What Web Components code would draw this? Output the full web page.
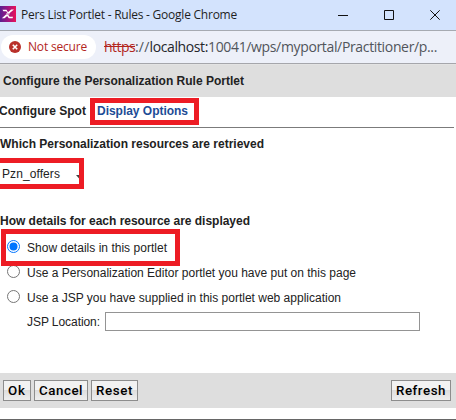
<!DOCTYPE html>
<html lang="en"><head><meta charset="utf-8"><title>Pers List Portlet - Rules</title>
<style>
html,body{margin:0;width:456px;height:420px;overflow:hidden;background:#fff}
</style></head><body>
<portlet-window></portlet-window>
<script>
const define=(name,html,init)=>customElements.define(name,class extends HTMLElement{
  connectedCallback(){
    if(this.shadowRoot)return;
    const t=document.createElement('template');t.innerHTML=html;
    this.attachShadow({mode:'open'}).append(t.content.cloneNode(true));
    if(init)init.call(this,this.shadowRoot);
  }
});

// A single line of text whose tracking is adjusted to span the given width.
define('fit-text',`<style>:host{display:block;white-space:nowrap;flex:none}span{display:inline-block;white-space:pre}:host([struck]) span{text-decoration:line-through}</style><span><slot></slot></span>`,function(root){
  const s=root.querySelector('span'),w=+this.getAttribute('w');
  const n=this.textContent.length,nat=s.getBoundingClientRect().width;
  s.style.letterSpacing=((w-nat)/n)+'px';
  this.style.width=w+'px';
});

define('title-bar',`<style>
:host{display:flex;align-items:center;box-sizing:border-box;height:30px;background:#d3e3fd;color:#1f1f1f;font:12px/16px "Open Sans","Noto Sans",sans-serif}
.logo{width:16px;height:16px;flex:none;margin:0 5px 2px 0}
fit-text{margin-right:auto}
.ctl{width:120px;height:30px;flex:none}
</style>
<svg class="logo" viewBox="0 0 16 16"><defs><linearGradient id="g" x1="0" y1="0" x2="1" y2="0"><stop offset="0" stop-color="#5a2090"/><stop offset=".5" stop-color="#a01582"/><stop offset="1" stop-color="#ea1257"/></linearGradient></defs>
<rect width="16" height="16" fill="url(#g)"/><path d="M2.5 3.8h4L8 6.2 11.2 3.4H14L9.4 7.2H7.6L6.2 5.2H3.4zM1.8 12.2 6 8.6H8L9.6 10.8H13L12.6 12.2H8.8L7.2 9.9 4.6 12.2z" fill="#fff"/><path d="M6.2 7.9h3.4" stroke="#fff" stroke-width="1"/></svg>
<fit-text w="216">Pers List Portlet - Rules - Google Chrome</fit-text>
<svg class="ctl" viewBox="336 0 120 30" fill="none" stroke="#111"><path d="M338 15.5h10M384.5 10.5h9v9h-9zM430.3 10.3l9.4 9.4M439.7 10.3l-9.4 9.4"/></svg>`);

define('address-bar',`<style>
:host{display:flex;align-items:center;box-sizing:border-box;height:34px;border-top:1px solid #a6aab1;border-bottom:1px solid #a5a6ab;background:#edf0f9;font:14px/20px "Open Sans","Noto Sans",sans-serif;color:#51555b}
.chip{display:flex;align-items:center;box-sizing:border-box;width:95px;height:24px;margin:0 8px 0 1px;padding-left:8px;border-radius:12px;background:#fff;color:#b3261e;font-size:12px}
.chip svg{width:12px;height:12px;margin-right:7px}
.p{color:#b3261e}.h{color:#24262a}
</style>
<div class="chip"><svg viewBox="0 0 12 12"><circle cx="6" cy="6" r="6" fill="#b9302a"/><path d="M3.8 3.8l4.4 4.4M8.2 3.8L3.8 8.2" stroke="#fff" stroke-width="1.6"/></svg><fit-text w="59">Not secure</fit-text></div>
<fit-text class="p" struck w="31">https</fit-text><fit-text w="14.5">://</fit-text><fit-text class="h" w="58.5">localhost:</fit-text><fit-text w="229">10041/wps/myportal/Practitioner/p...</fit-text>`);

// Red annotation frame laid over the content.
define('mark-frame',`<style>:host{position:absolute;box-sizing:border-box;border:5px solid #ed1c24;pointer-events:none}</style>`);

define('radio-row',`<style>
:host{display:flex;align-items:center;height:25px;padding-left:7px}
svg{width:13px;height:13px;margin-right:7px;flex:none}
.dot{display:none}:host([checked]) .dot{display:block}
:host([checked]) .ring{stroke:#0075ff}
::slotted(*){margin-top:3px}
</style><svg viewBox="0 0 13 13"><circle class="ring" cx="6.5" cy="6.5" r="6" fill="#fff" stroke="#767676"/><circle class="dot" cx="6.5" cy="6.5" r="4" fill="#0075ff"/></svg><slot></slot>`);

define('push-button',`<style>:host{display:flex;box-sizing:border-box;height:21px;align-items:center;justify-content:center;border:1px solid #8d8d8d;background:linear-gradient(#f2f2f2 0 50%,#dedede 50%,#eee);color:#000;font:500 13.33px/19px Roboto,"Liberation Sans",Arial,sans-serif}</style><slot></slot>`);

define('action-bar',`<style>:host{display:flex;align-items:center;gap:3px;box-sizing:border-box;height:35px;padding:0 5px 0 3px;background:#dedede}</style>
<push-button style="width:28px"><fit-text w="18">Ok</fit-text></push-button>
<push-button style="width:54px"><fit-text w="44">Cancel</fit-text></push-button>
<push-button style="width:47px"><fit-text w="37">Reset</fit-text></push-button>
<push-button style="width:60px;margin-left:auto"><fit-text w="50">Refresh</fit-text></push-button>`);

define('portlet-window',`<style>
:host{display:flex;flex-direction:column;position:relative;width:456px;height:420px;box-sizing:border-box;overflow:hidden;background:#fff;border-bottom:1px solid #666;color:#222;font:12px/16px "Liberation Sans",Arial,sans-serif}
.head{box-sizing:border-box;height:33px;padding:8px 3px 0;background:#dedede;border-top:1px solid #e3e3e3;font-weight:bold}
.tabs{display:flex;gap:11px;box-sizing:border-box;height:31px;padding-top:6px;border-bottom:1px solid #7b7b7b;margin:0 2px 0 -1px;font-weight:bold}
.tabs .on{color:#1c4c96}
.q{font-weight:bold;padding-top:8px}
.sel{display:flex;align-items:center;padding:14px 0 0 2px}
.sel svg{width:7px;height:5px;margin:7px 0 0 16px}
.q2{font-weight:bold;padding-top:31px}
.opts{padding-top:5px}
.jsp{display:flex;align-items:center;gap:5px;padding:3px 0 0 27px}
input{box-sizing:border-box;width:315px;height:19px;border:1px solid #949494;background:#fff;padding:0;margin:0}
action-bar{margin-top:42px}
</style>
<title-bar></title-bar><address-bar></address-bar>
<div class="head"><fit-text w="241">Configure the Personalization Rule Portlet</fit-text></div>
<div class="tabs"><fit-text w="87">Configure Spot</fit-text><fit-text class="on" w="91">Display Options</fit-text></div>
<div class="q"><fit-text w="264">Which Personalization resources are retrieved</fit-text></div>
<div class="sel"><fit-text w="58">Pzn_offers</fit-text><svg viewBox="0 0 7 5"><path d="M0 0h7L3.5 4z" fill="#444"/></svg></div>
<div class="q2"><fit-text w="250">How details for each resource are displayed</fit-text></div>
<div class="opts">
<radio-row checked><fit-text w="140">Show details in this portlet</fit-text></radio-row>
<radio-row><fit-text w="329">Use a Personalization Editor portlet you have put on this page</fit-text></radio-row>
<radio-row><fit-text w="314">Use a JSP you have supplied in this portlet web application</fit-text></radio-row></div>
<div class="jsp"><fit-text w="73">JSP Location:</fit-text><input aria-label="JSP Location"></div>
<action-bar></action-bar>
<mark-frame style="left:90px;top:98px;width:109px;height:27px"></mark-frame>
<mark-frame style="left:-6px;top:158px;width:90px;height:31px"></mark-frame>
<mark-frame style="left:1px;top:229px;width:179px;height:37px"></mark-frame>`);
</script></body></html>
